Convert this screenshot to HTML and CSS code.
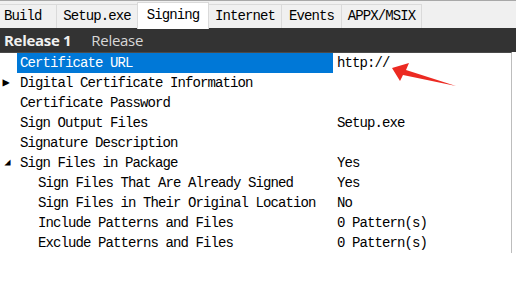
FILE: index.html
```html
<!DOCTYPE html>
<html lang="en">
<head>
  <meta charset="UTF-8">
  <title>Signing</title>
  <link rel="stylesheet" href="styles.css">
</head>
<body>
  <div class="tabs">
    <div class="tab t-build">Build</div>
    <div class="tab t-setup">Setup.exe</div>
    <div class="tab t-signing active">Signing</div>
    <div class="tab t-internet">Internet</div>
    <div class="tab t-events">Events</div>
    <div class="tab t-appx">APPX/MSIX</div>
  </div>
  <div class="config-bar">
    <span class="config-name">Release 1</span>
    <span class="config-kind">Release</span>
  </div>
  <div class="grid">
    <div class="row selected"><span class="glyph"></span><span class="name">Certificate URL</span><span class="value">http://</span></div>
    <div class="row"><span class="glyph closed">&#9654;</span><span class="name">Digital Certificate Information</span><span class="value"></span></div>
    <div class="row"><span class="glyph"></span><span class="name">Certificate Password</span><span class="value"></span></div>
    <div class="row"><span class="glyph"></span><span class="name">Sign Output Files</span><span class="value">Setup.exe</span></div>
    <div class="row"><span class="glyph"></span><span class="name">Signature Description</span><span class="value"></span></div>
    <div class="row"><span class="glyph open">&#9698;</span><span class="name">Sign Files in Package</span><span class="value">Yes</span></div>
    <div class="row child"><span class="glyph"></span><span class="name">Sign Files That Are Already Signed</span><span class="value">Yes</span></div>
    <div class="row child"><span class="glyph"></span><span class="name">Sign Files in Their Original Location</span><span class="value">No</span></div>
    <div class="row child"><span class="glyph"></span><span class="name">Include Patterns and Files</span><span class="value">0 Pattern(s)</span></div>
    <div class="row child"><span class="glyph"></span><span class="name">Exclude Patterns and Files</span><span class="value">0 Pattern(s)</span></div>
  </div>

  <!-- annotation arrow pointing at the URL value -->
  <svg class="arrow" width="516" height="281" viewBox="0 0 516 281">
    <polygon points="392,68 409,63 406,70 456,86 403,75 400,81" fill="#ec2a22"/>
  </svg>
</body>
</html>
```

FILE: styles.css
```css
html, body {
  margin: 0;
  padding: 0;
  background: #fff;
}
body {
  width: 516px;
  height: 281px;
  overflow: hidden;
  position: relative;
  font-family: "Liberation Mono", "Courier New", monospace;
  font-size: 14px;
  letter-spacing: -0.9px;
  color: #000;
}
.tabs {
  display: flex;
  align-items: flex-end;
  height: 28px;
  background: #f0f0f0;
  border-top: 1px solid #a8a8a8;
  box-sizing: border-box;
}
.tab {
  height: 24px;
  line-height: 23px;
  text-align: center;
  border: 1px solid #dadada;
  border-bottom: none;
  margin-right: -1px;
  box-sizing: border-box;
  background: #f0f0f0;
}
.t-build { width: 57px; border-left: none; text-align: left; padding-left: 4px; }
.t-setup { width: 82px; }
.t-signing { width: 72px; }
.t-internet { width: 74px; }
.t-events { width: 61px; }
.t-appx { width: 81px; }
.tab.active {
  height: 27px;
  line-height: 25px;
  background: #fff;
  margin-bottom: -1px;
  position: relative;
}
.config-bar {
  height: 24px;
  background: #333;
  display: flex;
  align-items: center;
  gap: 20px;
  padding-left: 4px;
  font-family: "Open Sans", "Noto Sans", sans-serif;
  font-size: 15px;
  letter-spacing: -0.3px;
}
.config-name { color: #f0f0f0; font-weight: bold; }
.config-kind { color: #d8d8d8; }
.grid {
  border-top: 1px solid #4a4a4a;
  border-right: 1px solid #bdbdbd;
  margin-right: 4px;
}
.row {
  display: grid;
  grid-template-columns: 17px 316px 1fr;
  height: 20px;
  line-height: 20px;
  white-space: nowrap;
}
.glyph {
  font-size: 9px;
  letter-spacing: 0;
  text-align: center;
  padding-right: 2px;
}
.glyph.closed { font-size: 12px; padding-right: 5px; }
.glyph.open { font-size: 10px; }
.name { padding-left: 3px; }
.row.child .name { padding-left: 21px; }
.value { padding-left: 4px; }
.row.selected .name {
  background: #0078d7;
  color: #fff;
}
.arrow {
  position: absolute;
  left: 0;
  top: 0;
  pointer-events: none;
}
```
